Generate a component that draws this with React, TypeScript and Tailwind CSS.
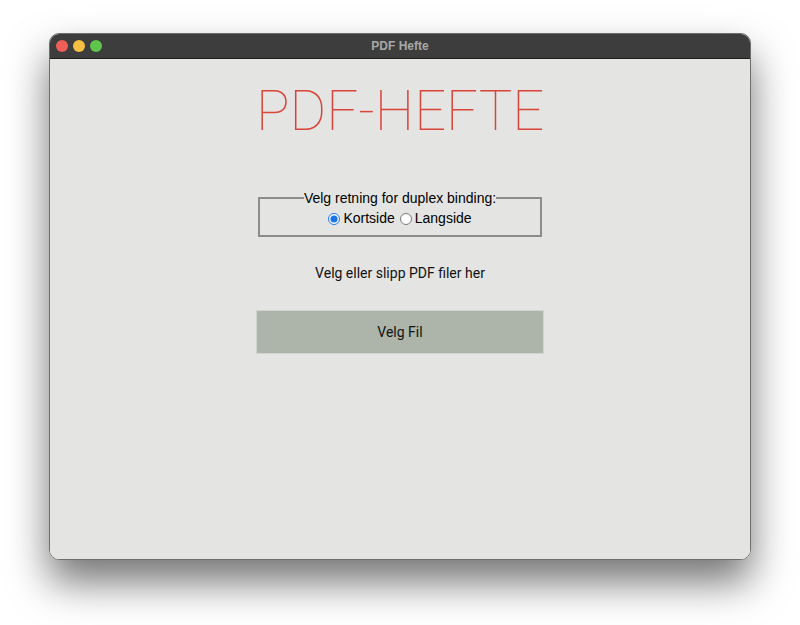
import React from "react";

export default function App() {
  return (
    <div className="w-[800px] h-[625px] bg-white relative overflow-hidden" style={{ fontFamily: "Roboto, 'Liberation Sans', sans-serif" }}>
      <div className="absolute left-[49px] top-[33px] w-[702px] h-[527px] rounded-[10px] overflow-hidden flex flex-col border border-[#6e6e6e] shadow-[0_22px_40px_rgba(0,0,0,0.55)]">
        <div className="h-[25px] bg-[#3c3d3c] relative flex items-center justify-center border-b border-[#1e1e1e]">
          <div className="absolute left-[6px] top-[6px] flex gap-[5px]">
            <div className="w-[12px] h-[12px] rounded-full bg-[#ed5f57]" />
            <div className="w-[12px] h-[12px] rounded-full bg-[#f5bf41]" />
            <div className="w-[12px] h-[12px] rounded-full bg-[#5ec54a]" />
          </div>
          <span className="text-[12px] font-bold text-[#a8a8a8]" style={{ fontFamily: "'Liberation Sans', Arial, sans-serif" }}>PDF Hefte</span>
        </div>
        <div className="flex-1 bg-[#e4e5e3] flex flex-col items-center">
          <div className="mt-[17px] text-[56px] leading-[70px] font-thin text-[#d9443b]" style={{ fontFamily: "Roboto, sans-serif" }}>PDF-HEFTE</div>
          <fieldset className="mt-[44px] w-[284px] border-2 border-[#8c8c8c] px-2 pb-[6px] flex justify-center text-[14px] text-black" style={{ fontFamily: "'Liberation Sans', Arial, sans-serif" }}>
            <legend className="mx-auto px-0 leading-[16px]">Velg retning for duplex binding:</legend>
            <div className="flex items-center gap-[3px] mt-[2px]">
              <input type="radio" name="dir" defaultChecked className="w-[12px] h-[12px] m-0 accent-[#1a73e8]" />
              <span>Kortside</span>
              <input type="radio" name="dir" className="w-[12px] h-[12px] m-0 ml-[2px]" />
              <span>Langside</span>
            </div>
          </fieldset>
          <div className="mt-[26px] text-[14px] text-[#111]">Velg eller slipp PDF filer her</div>
          <div className="mt-[26px] w-[288px] h-[44px] bg-[#adb5aa] border border-[#cfd4cc] flex items-center justify-center text-[14px] text-[#111]">Velg Fil</div>
        </div>
      </div>
    </div>
  );
}
